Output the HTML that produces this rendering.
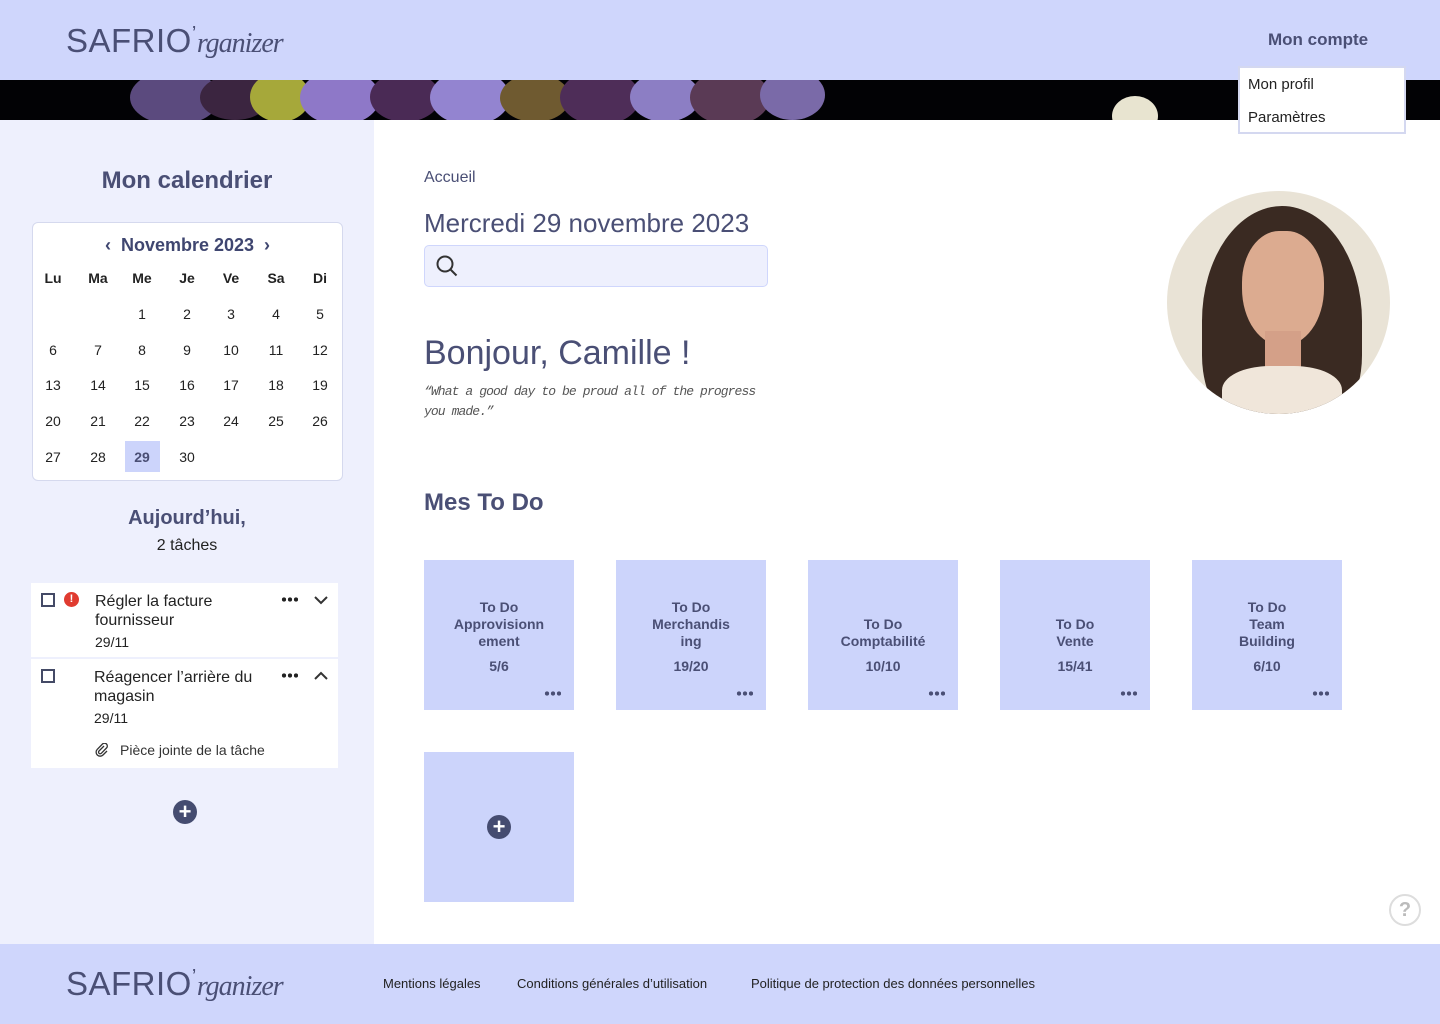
<!DOCTYPE html>
<html><head><meta charset="utf-8"><style>
*{margin:0;padding:0;box-sizing:border-box}
body{width:1440px;height:1024px;position:relative;background:#fff;font-family:"Liberation Sans",sans-serif;color:#4a4f75;overflow:hidden}
.abs{position:absolute}
.hdr{left:0;top:0;width:1440px;height:80px;background:#cfd6fc}
.ban{left:0;top:80px;width:1440px;height:40px;background:#020205;overflow:hidden}
.logo{font-size:33px;color:#4a4f75;letter-spacing:.5px}
.logo i{font-family:"Liberation Serif",serif;font-size:28px;font-style:italic;letter-spacing:-1px}
.left{left:0;top:120px;width:374px;height:824px;background:#eef0fd}
.cal{left:32px;top:222px;width:311px;height:259px;background:#fff;border:1px solid #d5d9ee;border-radius:6px}
.c{position:absolute;width:36px;text-align:center;font-size:14px;color:#222}
.task{left:31px;width:307px;background:#fff}
.cb{position:absolute;width:14px;height:14px;border:2px solid #444a66}
.tile{position:absolute;width:150px;height:150px;background:#ccd4fb;text-align:center;font-weight:bold;font-size:14px;color:#4a4f75;line-height:17px}
.dots{position:absolute;right:13px;bottom:14px;width:17px;height:5px;background:radial-gradient(circle,#4a4f75 2px,transparent 2.3px) 0 0/6px 5px repeat-x}
.dd{position:absolute;width:17px;height:5px;background:radial-gradient(circle,#222 2px,transparent 2.3px) 0 0/6px 5px repeat-x}
.plus{position:absolute;width:24px;height:24px;border-radius:50%;background:#454c70;color:#fff;text-align:center;font-size:22px;line-height:23px;font-weight:bold}
.ftr{left:0;top:944px;width:1440px;height:80px;background:#cfd6fc}
.fl{font-size:13px;color:#222;top:976px}
.b{position:absolute;border-radius:50%}
</style></head><body>
<div class="abs hdr"></div>
<div class="abs logo" style="left:66px;top:22px">SAFRIO<sup style="font-size:20px">’</sup><i>rganizer</i></div>
<div class="abs" style="left:1268px;top:30px;font-size:17px;font-weight:bold;color:#4a4f75">Mon compte</div>
<div class="abs ban">
 <div class="b" style="left:130px;top:-10px;width:90px;height:55px;background:#5b4a7e"></div>
 <div class="b" style="left:200px;top:-5px;width:70px;height:45px;background:#3b2540"></div>
 <div class="b" style="left:250px;top:-8px;width:60px;height:50px;background:#a6a83a"></div>
 <div class="b" style="left:300px;top:-10px;width:80px;height:55px;background:#8e78c8"></div>
 <div class="b" style="left:370px;top:-8px;width:70px;height:50px;background:#4a2a55"></div>
 <div class="b" style="left:430px;top:-10px;width:80px;height:55px;background:#9384d0"></div>
 <div class="b" style="left:500px;top:-6px;width:70px;height:48px;background:#6f5a30"></div>
 <div class="b" style="left:560px;top:-10px;width:80px;height:55px;background:#4e2d58"></div>
 <div class="b" style="left:630px;top:-8px;width:70px;height:50px;background:#8c7ec4"></div>
 <div class="b" style="left:690px;top:-10px;width:80px;height:55px;background:#5a3a55"></div>
 <div class="b" style="left:760px;top:-10px;width:65px;height:50px;background:#7a6aa8"></div>
 <div class="abs" style="left:1112px;top:16px;width:46px;height:40px;border-radius:50%;background:#e8e4d0"></div>
</div>
<div class="abs" style="left:1238px;top:66px;width:168px;height:68px;background:#fff;border:2px solid #d4d8f0;font-size:15px;color:#222">
 <div style="position:absolute;left:8px;top:8px">Mon profil</div>
 <div style="position:absolute;left:8px;top:41px">Paramètres</div>
</div>
<div class="abs left"></div>
<div class="abs" style="left:0;width:374px;top:167px;text-align:center;font-size:24px;font-weight:bold">Mon calendrier</div>
<div class="abs cal">
 <div style="position:absolute;left:0;width:100%;top:12px;text-align:center;font-size:18px;font-weight:bold;color:#3f4670">‹&nbsp; Novembre 2023 &nbsp;›</div>
</div>
<div class="abs" style="left:125px;top:441px;width:35px;height:31px;background:#ccd4fb"></div>
<div id="cal"></div>
<div class="abs" style="left:0;width:374px;top:507px;text-align:center;font-size:20px;font-weight:bold">Aujourd’hui,</div>
<div class="abs" style="left:0;width:374px;top:537px;text-align:center;font-size:16px;color:#222">2 tâches</div>
<div class="abs task" style="top:583px;height:74px"></div>
<div class="abs task" style="top:659px;height:109px"></div>
<div class="abs" style="top:657px;left:31px;width:307px;height:2px;background:#eef0fd"></div>
<div class="cb" style="left:41px;top:593px"></div>
<div class="abs" style="left:64px;top:592px;width:15px;height:15px;border-radius:50%;background:#e03b30;color:#fff;font-size:11px;text-align:center;line-height:15px;font-weight:bold">!</div>
<div class="abs" style="left:95px;top:592px;font-size:16px;line-height:19px;color:#222">Régler la facture<br>fournisseur</div>
<div class="abs" style="left:95px;top:634px;font-size:14px;color:#222">29/11</div>
<div class="cb" style="left:41px;top:669px"></div>
<div class="abs" style="left:94px;top:668px;font-size:16px;line-height:19px;color:#222">Réagencer l’arrière du<br>magasin</div>
<div class="abs" style="left:94px;top:710px;font-size:14px;color:#222">29/11</div>
<svg class="abs" style="left:95px;top:743px" width="14" height="14"><path d="M9 3L4 8a1.6 1.6 0 0 0 2.3 2.3L11.5 5A2.8 2.8 0 0 0 7.5 1L2.3 6.3a4 4 0 0 0 5.7 5.7L12 8" stroke="#333" stroke-width="1.3" fill="none"/></svg>
<div class="abs" style="left:120px;top:742px;font-size:14px;color:#333">Pièce jointe de la tâche</div>
<div class="dd" style="left:281px;top:597px"></div>
<div class="dd" style="left:281px;top:673px"></div>
<svg class="abs" style="left:313px;top:592px" width="16" height="16"><path d="M2 5l6 6 6-6" stroke="#333" stroke-width="2" fill="none"/></svg>
<svg class="abs" style="left:313px;top:668px" width="16" height="16"><path d="M2 11l6-6 6 6" stroke="#333" stroke-width="2" fill="none"/></svg>
<div class="plus" style="left:173px;top:800px">+</div>

<div class="abs" style="left:424px;top:169px;font-size:16px">Accueil</div>
<div class="abs" style="left:424px;top:208px;font-size:26px">Mercredi 29 novembre 2023</div>
<div class="abs" style="left:424px;top:245px;width:344px;height:42px;background:#eef0fd;border:1px solid #cfd6fc;border-radius:5px"></div>
<svg class="abs" style="left:435px;top:254px" width="24" height="24"><circle cx="10" cy="10" r="7.5" stroke="#333" stroke-width="2" fill="none"/><path d="M15.5 15.5l6 6" stroke="#333" stroke-width="2"/></svg>
<div class="abs" style="left:424px;top:334px;font-size:34px">Bonjour, Camille !</div>
<div class="abs" style="left:424px;top:382px;font-size:13px;line-height:20px;font-family:'Liberation Mono',monospace;color:#555;letter-spacing:-.9px;font-style:italic">“What a good day to be proud  all of the progress<br>you made.”</div>
<div class="abs" style="left:1167px;top:191px;width:223px;height:223px;border-radius:50%;overflow:hidden;background:#e9e3d6">
 <div class="abs" style="left:35px;top:15px;width:160px;height:230px;border-radius:50% 50% 35% 35%;background:#3a2a22"></div>
 <div class="abs" style="left:75px;top:40px;width:82px;height:115px;border-radius:45% 45% 50% 50%;background:#dcab90"></div>
 <div class="abs" style="left:98px;top:140px;width:36px;height:40px;background:#d4a088"></div>
 <div class="abs" style="left:55px;top:175px;width:120px;height:60px;border-radius:40% 40% 0 0;background:#f0e6da"></div>
</div>
<div class="abs" style="left:424px;top:489px;font-size:24px;font-weight:bold">Mes To Do</div>

<div class="tile" style="left:424px;top:560px"><div style="margin-top:39px">To Do<br>Approvisionn<br>ement</div><div style="margin-top:8px">5/6</div><div class="dots"></div></div>
<div class="tile" style="left:616px;top:560px"><div style="margin-top:39px">To Do<br>Merchandis<br>ing</div><div style="margin-top:8px">19/20</div><div class="dots"></div></div>
<div class="tile" style="left:808px;top:560px"><div style="margin-top:56px">To Do<br>Comptabilité</div><div style="margin-top:8px">10/10</div><div class="dots"></div></div>
<div class="tile" style="left:1000px;top:560px"><div style="margin-top:56px">To Do<br>Vente</div><div style="margin-top:8px">15/41</div><div class="dots"></div></div>
<div class="tile" style="left:1192px;top:560px"><div style="margin-top:39px">To Do<br>Team<br>Building</div><div style="margin-top:8px">6/10</div><div class="dots"></div></div>
<div class="tile" style="left:424px;top:752px"><div class="plus" style="left:63px;top:63px">+</div></div>
<div class="abs" style="left:1389px;top:894px;width:32px;height:32px;border-radius:50%;border:2px solid #ddd;color:#bbb;text-align:center;font-size:20px;line-height:28px;font-weight:bold">?</div>

<div class="abs ftr"></div>
<div class="abs logo" style="left:66px;top:965px">SAFRIO<sup style="font-size:20px">’</sup><i>rganizer</i></div>
<div class="abs fl" style="left:383px">Mentions légales</div>
<div class="abs fl" style="left:517px">Conditions générales d’utilisation</div>
<div class="abs fl" style="left:751px">Politique de protection des données  personnelles</div>
<script>
var xs=[53,98,142,187,231,276,320],h=["Lu","Ma","Me","Je","Ve","Sa","Di"],ys=[314,350,385,421,457],s="";
h.forEach(function(t,i){s+='<div class="c" style="left:'+(xs[i]-18)+'px;top:270px;font-weight:bold">'+t+'</div>'});
for(var d=1;d<=30;d++){var p=d+1,r=Math.floor(p/7),c=p%7;s+='<div class="c" style="left:'+(xs[c]-18)+'px;top:'+(ys[r]-8)+'px'+(d==29?';font-weight:bold;color:#4a4f75':'')+'">'+d+'</div>'}
document.getElementById("cal").innerHTML=s;
</script>
</body></html>
